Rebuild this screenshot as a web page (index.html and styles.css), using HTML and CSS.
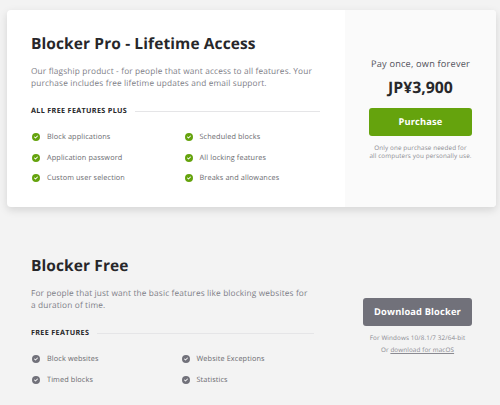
FILE: index.html
```html
<!DOCTYPE html>
<html lang="en">
<head>
  <meta charset="UTF-8">
  <meta name="viewport" content="width=device-width, initial-scale=1.0">
  <title>Blocker Pricing</title>
  <link rel="stylesheet" href="styles.css">
</head>
<body>
  <!-- Check icon, shared by both lists -->
  <svg class="sprite" aria-hidden="true">
    <symbol id="check" viewBox="0 0 20 20">
      <path fill="currentColor" fill-rule="evenodd" d="M10 18a8 8 0 100-16 8 8 0 000 16zm3.707-9.293a1 1 0 00-1.414-1.414L9 10.586 7.707 9.293a1 1 0 00-1.414 1.414l2 2a1 1 0 001.414 0l4-4z" clip-rule="evenodd"/>
    </symbol>
  </svg>

  <!-- Pro plan -->
  <section class="plan plan-pro">
    <div class="plan-info">
      <h2 class="plan-title">Blocker Pro - Lifetime Access</h2>
      <p class="plan-description">Our flagship product - for people that want access to all features. Your<br>purchase includes free lifetime updates and email support.</p>
      <div class="divider">
        <h3 class="divider-label">All free features plus</h3>
        <span class="divider-line"></span>
      </div>
      <ul class="features">
        <li><svg class="icon"><use href="#check"/></svg><span>Block applications</span></li>
        <li><svg class="icon"><use href="#check"/></svg><span>Scheduled blocks</span></li>
        <li><svg class="icon"><use href="#check"/></svg><span>Application password</span></li>
        <li><svg class="icon"><use href="#check"/></svg><span>All locking features</span></li>
        <li><svg class="icon"><use href="#check"/></svg><span>Custom user selection</span></li>
        <li><svg class="icon"><use href="#check"/></svg><span>Breaks and allowances</span></li>
      </ul>
    </div>
    <div class="plan-action">
      <p class="pay-once">Pay once, own forever</p>
      <p class="price">JP¥3,900</p>
      <a href="#" class="button">Purchase</a>
      <p class="note">Only one purchase needed for<br>all computers you personally use.</p>
    </div>
  </section>

  <!-- Free plan -->
  <section class="plan plan-free">
    <div class="plan-info">
      <h2 class="plan-title">Blocker Free</h2>
      <p class="plan-description">For people that just want the basic features like blocking websites for<br>a duration of time.</p>
      <div class="divider">
        <h3 class="divider-label">Free features</h3>
        <span class="divider-line"></span>
      </div>
      <ul class="features">
        <li><svg class="icon"><use href="#check"/></svg><span>Block websites</span></li>
        <li><svg class="icon"><use href="#check"/></svg><span>Website Exceptions</span></li>
        <li><svg class="icon"><use href="#check"/></svg><span>Timed blocks</span></li>
        <li><svg class="icon"><use href="#check"/></svg><span>Statistics</span></li>
      </ul>
    </div>
    <div class="plan-action">
      <a href="#" class="button">Download Blocker</a>
      <p class="note">For Windows 10/8.1/7 32/64-bit</p>
      <p class="note">Or <a href="#">download for macOS</a></p>
    </div>
  </section>
</body>
</html>
```
FILE: styles.css
```css
* {
  margin: 0;
  padding: 0;
  box-sizing: border-box;
}

body {
  font-family: 'Open Sans', 'Noto Sans', sans-serif;
  text-rendering: geometricPrecision;
  background: #f3f3f3;
  color: #27272a;
  padding: 10px 4px 0 7px;
  height: 405px;
  overflow: hidden;
}

.sprite {
  display: none;
}

/* Plans */
.plan {
  display: flex;
  width: 489px;
}

.plan-info {
  flex: 1;
  padding: 23px 25px 0 24px;
}

.plan-pro {
  height: 197px;
  background: #fff;
  border-radius: 4px;
  overflow: hidden;
  box-shadow: 0 3px 8px rgba(0, 0, 0, 0.13);
}

.plan-free {
  margin-top: 25px;
}

.plan-title {
  font-size: 15.5px;
  line-height: 20px;
  font-weight: 700;
  letter-spacing: 0.1px;
  white-space: nowrap;
}

.plan-description {
  margin-top: 13px;
  font-size: 8.3px;
  line-height: 12.2px;
  letter-spacing: 0.14px;
  color: #808088;
  white-space: nowrap;
}

/* Heading with a rule */
.divider {
  display: flex;
  align-items: center;
  gap: 8px;
  margin-top: 15.6px;
}

.divider-label {
  font-size: 7.2px;
  line-height: 10px;
  font-weight: 700;
  letter-spacing: 0.34px;
  text-transform: uppercase;
}

.divider-line {
  flex: 1;
  height: 1px;
  background: #e5e5e7;
}

/* Features */
.features {
  display: grid;
  grid-template-columns: 1fr 1fr;
  column-gap: 16px;
  row-gap: 10.3px;
  margin-top: 16.4px;
  list-style: none;
}

.features li {
  display: flex;
  align-items: center;
  gap: 6px;
  height: 10px;
  font-size: 7.3px;
  letter-spacing: 0.12px;
  color: #6b6b70;
  white-space: nowrap;
}

.icon {
  width: 10px;
  height: 10px;
  color: #65a30d;
}

.plan-free .icon {
  color: #71717a;
}

/* Purchase and download */
.plan-action {
  width: 151px;
  display: flex;
  flex-direction: column;
  align-items: center;
  text-align: center;
  white-space: nowrap;
}

.plan-pro .plan-action {
  padding-top: 47px;
  background: #fafafa;
}

.pay-once {
  font-size: 9.2px;
  line-height: 14px;
  letter-spacing: 0.2px;
  color: #52525b;
}

.price {
  margin-top: 6px;
  font-size: 15.8px;
  line-height: 20px;
  font-weight: 700;
}

.button {
  display: block;
  width: 103px;
  height: 28px;
  margin-top: 11px;
  border-radius: 3px;
  background: #65a30d;
  color: #fff;
  font-size: 9.3px;
  line-height: 28px;
  font-weight: 700;
  letter-spacing: 0.16px;
  text-decoration: none;
}

.note {
  font-size: 6.3px;
  line-height: 8.2px;
  letter-spacing: 0.12px;
  color: #8a8a91;
}

.plan-pro .note {
  margin-top: 8px;
}

.plan-free .plan-action {
  width: 157px;
  padding-top: 66px;
}

.plan-free .button {
  width: 109px;
  margin-top: 0;
  background: #71717a;
}

.plan-free .note {
  margin-top: 8px;
}

.plan-free .note + .note {
  margin-top: 4px;
}

.note a {
  color: inherit;
}
```
